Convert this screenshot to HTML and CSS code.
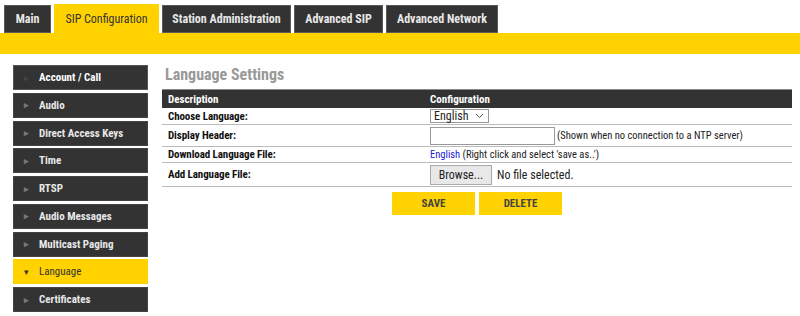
FILE: index.html
```html
<!DOCTYPE html>
<html>
<head>
<meta charset="utf-8">
<link rel="stylesheet" href="styles.css">
</head>
<body>
<nav class="tabs">
  <a class="tab t-main">Main</a>
  <a class="tab tab-active t-sip">SIP Configuration</a>
  <a class="tab t-station">Station Administration</a>
  <a class="tab t-adv">Advanced SIP</a>
  <a class="tab t-net">Advanced Network</a>
</nav>
<div class="bar"></div>
<div class="main">
  <ul class="side">
    <li class="item item-current"><span class="arrow">&#9656;</span>Account / Call</li>
    <li class="item"><span class="arrow">&#9656;</span>Audio</li>
    <li class="item"><span class="arrow">&#9656;</span>Direct Access Keys</li>
    <li class="item"><span class="arrow">&#9656;</span>Time</li>
    <li class="item"><span class="arrow">&#9656;</span>RTSP</li>
    <li class="item"><span class="arrow">&#9656;</span>Audio Messages</li>
    <li class="item"><span class="arrow">&#9656;</span>Multicast Paging</li>
    <li class="item item-open"><span class="arrow">&#9662;</span>Language</li>
    <li class="item"><span class="arrow">&#9656;</span>Certificates</li>
  </ul>
  <div class="content">
    <h2 class="title">Language Settings</h2>
    <table class="grid">
      <thead>
        <tr><th class="c1">Description</th><th>Configuration</th></tr>
      </thead>
      <tbody>
        <tr class="r1"><td class="c1">Choose Language:</td><td><span class="select">English<svg class="chev" width="9" height="6" viewBox="0 0 9 6"><path d="M1 1 L4.5 4.5 L8 1" fill="none" stroke="#555" stroke-width="1"/></svg></span></td></tr>
        <tr class="r2"><td class="c1">Display Header:</td><td><span class="input"></span><span class="note">(Shown when no connection to a NTP server)</span></td></tr>
        <tr class="r3"><td class="c1">Download Language File:</td><td><a class="link">English</a> (Right click and select 'save as..')</td></tr>
        <tr class="r4"><td class="c1">Add Language File:</td><td><span class="browse">Browse...</span><span class="nofile">No file selected.</span></td></tr>
      </tbody>
    </table>
    <div class="actions">
      <button class="btn">SAVE</button>
      <button class="btn">DELETE</button>
    </div>
  </div>
</div>
</body>
</html>
```
FILE: styles.css
```css
html, body {
  margin: 0;
  padding: 0;
  background: #fff;
}
body {
  font-family: "Roboto", "Liberation Sans", sans-serif;
  font-stretch: 75%;
  font-size: 12px;
  color: #222;
}
.tabs {
  display: flex;
  gap: 3px;
  padding: 4px 0 0 4px;
  height: 33px;
  box-sizing: border-box;
  align-items: flex-end;
}
.tab {
  display: flex;
  align-items: center;
  justify-content: center;
  height: 28px;
  box-sizing: border-box;
  background: #333;
  border: 1px solid #5a5a5a;
  color: #e8e8e8;
  font-size: 12px;
  font-weight: bold;
}
.t-main { width: 47px; }
.t-sip { width: 105px; }
.t-station { width: 129px; }
.t-adv { width: 89px; }
.t-net { width: 112px; }
.tab-active {
  height: 29px;
  background: #ffd200;
  border-color: #ffd200;
  color: #333;
  font-weight: normal;
}
.bar {
  height: 21px;
  background: #ffd200;
}
.main {
  display: flex;
  gap: 14px;
  padding: 11px 0 0 13px;
}
.side {
  list-style: none;
  margin: 0;
  padding: 0;
  width: 135px;
  display: flex;
  flex-direction: column;
  gap: 2.75px;
}
.item {
  height: 25px;
  box-sizing: border-box;
  background: #333;
  border: 1px solid #444;
  color: #e8e8e8;
  font-weight: bold;
  font-size: 11px;
  display: flex;
  align-items: center;
  padding-left: 10px;
}
.item-current {
  color: #fff;
  border-color: #555;
}
.arrow {
  width: 15px;
  color: #777;
  font-size: 9px;
}
.item-current .arrow {
  color: #444;
}
.item-open {
  background: #ffd200;
  border-color: #ffd200;
  color: #333;
  font-weight: normal;
}
.item-open .arrow {
  color: #333;
}
.content {
  width: 630px;
}
.title {
  margin: 3px 0 7px 3px;
  font-size: 16px;
  color: #999;
  font-weight: bold;
  height: 14px;
  line-height: 14px;
}
.grid {
  width: 630px;
  border-collapse: collapse;
  font-size: 11px;
}
.grid th {
  background: #333;
  color: #fff;
  text-align: left;
  height: 18px;
  padding: 0 0 0 6px;
  border-top: 1px solid #888;
}
.grid th.c1, .grid td.c1 {
  width: 260px;
}
.grid td {
  padding: 0 0 0 6px;
  border-bottom: 1px solid #bbb;
}
.grid td.c1 {
  font-weight: bold;
  color: #111;
  letter-spacing: -0.1px;
}
.r1 td { height: 16px; }
.r2 td { height: 21px; }
.r3 td { height: 15px; }
.r4 td { height: 23px; }
.grid th + th {
  padding-left: 2px;
}
.grid td + td {
  padding-left: 2px;
  color: #222;
  font-size: 10.5px;
}
.select {
  display: inline-flex;
  align-items: center;
  justify-content: space-between;
  width: 59px;
  height: 14px;
  box-sizing: border-box;
  border: 1px solid #999;
  padding: 0 4px 0 3px;
  font-size: 12px;
  vertical-align: middle;
}
.input {
  display: inline-block;
  width: 125px;
  height: 18px;
  box-sizing: border-box;
  border: 1px solid #999;
  vertical-align: middle;
}
.note {
  margin-left: 2px;
  vertical-align: middle;
}
.link {
  color: #2222dd;
}
.browse {
  display: inline-flex;
  align-items: center;
  justify-content: center;
  width: 62px;
  height: 20px;
  box-sizing: border-box;
  background: #e8e8e8;
  border: 1px solid #aaa;
  font-size: 12px;
  vertical-align: middle;
}
.nofile {
  margin-left: 5px;
  font-size: 12px;
  vertical-align: middle;
}
.actions {
  display: flex;
  justify-content: center;
  gap: 4px;
  margin-top: 5px;
}
.btn {
  width: 83px;
  height: 23px;
  background: #ffd200;
  border: none;
  color: #444;
  font-family: inherit;
  font-stretch: inherit;
  font-size: 11px;
  font-weight: bold;
}
```
